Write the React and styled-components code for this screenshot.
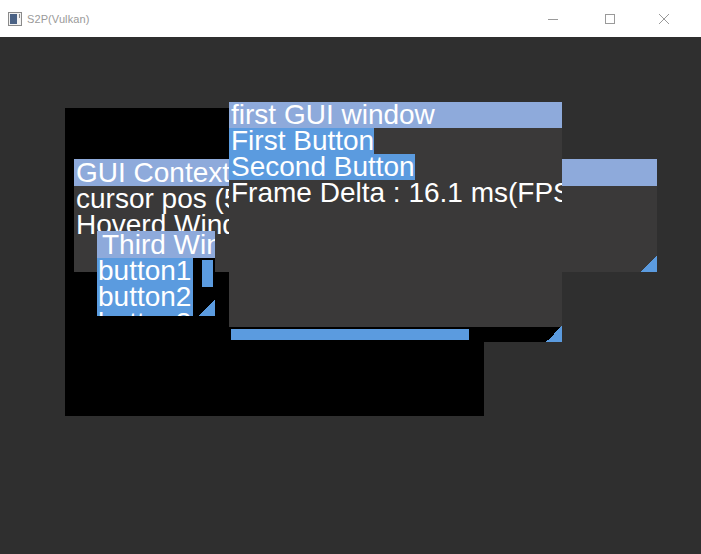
import React from 'react';
import styled, { createGlobalStyle } from 'styled-components';

const GlobalStyle = createGlobalStyle`
  html, body {
    margin: 0;
    padding: 0;
    background: #2f2f2f;
  }
  body {
    font-family: "Liberation Sans", Arial, sans-serif;
  }
`;

const Frame = styled.div`
  display: flex;
  flex-direction: column;
  width: 701px;
  height: 554px;
  overflow: hidden;
`;

const TitleBar = styled.div`
  display: flex;
  align-items: center;
  height: 37px;
  padding-left: 8px;
  box-sizing: border-box;
  background: #ffffff;
  flex-shrink: 0;
`;

const AppTitle = styled.span`
  margin-left: 5px;
  font-family: "Liberation Sans", Arial, sans-serif;
  font-size: 11px;
  color: #9a9a9a;
  letter-spacing: 0.1px;
`;

const Controls = styled.div`
  display: flex;
  align-items: center;
  margin-left: auto;
  padding-right: 32px;
`;

const ControlIcon = styled.svg`
  display: block;
  margin-left: ${(p) => p.$gap || 0}px;
`;

const Canvas = styled.div`
  position: relative;
  flex: 1;
  background: #2f2f2f;
`;

const BlackPanel = styled.div`
  position: absolute;
  background: #000;
`;

const Window = styled.div`
  position: absolute;
  display: flex;
  flex-direction: column;
  overflow: hidden;
  background: ${(p) => p.$bg || '#3a3939'};
  color: #ffffff;
  font-size: 28px;
  line-height: 26px;
  white-space: nowrap;
`;

const WinTitle = styled.div`
  height: ${(p) => p.$h}px;
  line-height: ${(p) => p.$h}px;
  padding-left: ${(p) => p.$pad}px;
  background: #8eaadb;
  flex-shrink: 0;
`;

const Body = styled.div`
  flex: 1;
  display: flex;
  flex-direction: ${(p) => (p.$row ? 'row' : 'column')};
  min-height: 0;
`;

const List = styled.div`
  display: flex;
  flex-direction: column;
`;

const Line = styled.div`
  height: 26px;
  padding-left: 2px;
`;

const Button = styled.div`
  width: fit-content;
  height: 26px;
  padding: 0 ${(p) => p.$right}px 0 ${(p) => p.$left}px;
  background: #5b9bdf;
`;

const VScroll = styled.div`
  width: 11px;
  margin: 2px 2px 0 auto;
`;

const Thumb = styled.div`
  width: 100%;
  height: 27px;
  background: #5b9bdf;
`;

const HScroll = styled.div`
  flex-shrink: 0;
  height: 15px;
  padding: 2px 0 0 2px;
  box-sizing: border-box;
  background: #000;
`;

const HThumb = styled.div`
  width: 238px;
  height: 11px;
  background: #5b9bdf;
`;

const Grip = styled.div`
  position: absolute;
  right: 0;
  bottom: 0;
  width: 16px;
  height: 16px;
  background: linear-gradient(to bottom right, transparent 50%, #5b9bdf 50%);
`;

function AppIcon() {
  return (
    <svg width="14" height="14" viewBox="0 0 14 14">
      <rect x="0.5" y="0.5" width="13" height="13" fill="#f2f2f2" stroke="#8a8a8a" />
      <rect x="2" y="2" width="7" height="10" fill="#4a6285" />
      <rect x="11" y="2" width="1" height="4" fill="#8a8a8a" />
    </svg>
  );
}

export default function App() {
  return (
    <>
      <GlobalStyle />
      <Frame>
        <TitleBar>
          <AppIcon />
          <AppTitle>S2P(Vulkan)</AppTitle>
          <Controls>
            <ControlIcon width="10" height="10" viewBox="0 0 10 10">
              <line x1="0" y1="5.5" x2="10" y2="5.5" stroke="#9a9a9a" />
            </ControlIcon>
            <ControlIcon $gap={47} width="10" height="10" viewBox="0 0 10 10">
              <rect x="0.5" y="0.5" width="9" height="9" fill="none" stroke="#9a9a9a" />
            </ControlIcon>
            <ControlIcon $gap={44} width="10" height="10" viewBox="0 0 10 10">
              <path d="M0 0 L10 10 M10 0 L0 10" stroke="#9a9a9a" />
            </ControlIcon>
          </Controls>
        </TitleBar>

        <Canvas>
          <BlackPanel style={{ left: 65, top: 71, width: 419, height: 308 }} />

          <Window style={{ left: 74, top: 122, width: 583, height: 113 }}>
            <WinTitle $h={27} $pad={2}>GUI Context</WinTitle>
            <Body>
              <Line>cursor pos (517, 289)</Line>
              <Line>Hoverd Window : 1</Line>
            </Body>
            <Grip />
          </Window>

          <Window $bg="#000" style={{ left: 97, top: 194, width: 118, height: 85 }}>
            <WinTitle $h={27} $pad={5}>Third Window</WinTitle>
            <Body $row>
              <List>
                <Button $left={1} $right={2}>button1</Button>
                <Button $left={1} $right={2}>button2</Button>
                <Button $left={1} $right={2}>button3</Button>
              </List>
              <VScroll>
                <Thumb />
              </VScroll>
            </Body>
            <Grip />
          </Window>

          <Window style={{ left: 229, top: 65, width: 333, height: 240 }}>
            <WinTitle $h={26} $pad={2}>first GUI window</WinTitle>
            <Body>
              <Button $left={2} $right={0}>First Button</Button>
              <Button $left={2} $right={0}>Second Button</Button>
              <Line>Frame Delta : 16.1 ms(FPS : 62.1)</Line>
            </Body>
            <HScroll>
              <HThumb />
            </HScroll>
            <Grip />
          </Window>
        </Canvas>
      </Frame>
    </>
  );
}
